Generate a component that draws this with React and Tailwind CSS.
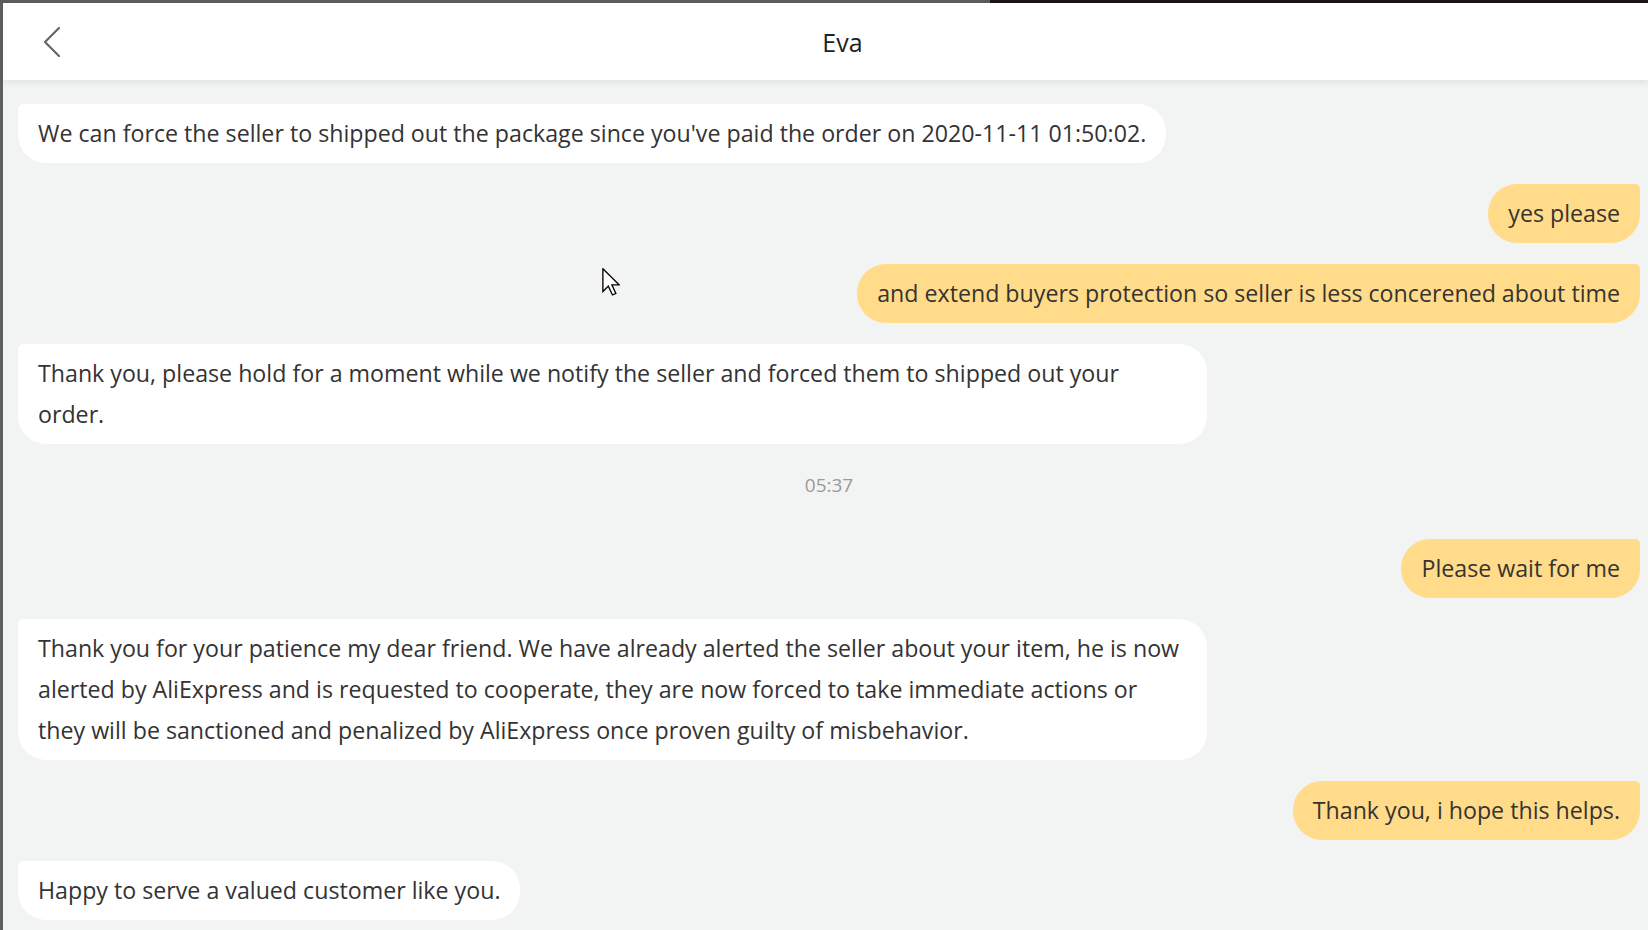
import React from "react";

function Left({ children, multi }) {
  return (
    <div className="flex justify-start">
      <div
        className={
          "bg-white rounded-[28px] rounded-tl-[5px] px-[20px] py-[9px] leading-[41px] text-[23.2px] text-[#333333] " +
          (multi ? "w-[1189px]" : "whitespace-nowrap")
        }
      >
        {children}
      </div>
    </div>
  );
}

function Right({ children }) {
  return (
    <div className="flex justify-end">
      <div className="bg-[#ffdb8a] rounded-[29px] rounded-tr-[5px] px-[20px] py-[9px] leading-[41px] text-[23.2px] text-[#363430] whitespace-nowrap">
        {children}
      </div>
    </div>
  );
}

export default function App() {
  return (
    <div className="w-[1648px] h-[930px] overflow-hidden flex flex-col bg-[#5f5f5f] font-['Open_Sans',sans-serif]">
      <div className="h-[3px] flex shrink-0">
        <div className="w-[990px] bg-[#5c5c5c]" />
        <div className="flex-1 bg-[#1b1414]" />
      </div>
      <div className="flex-1 flex min-h-0">
        <div className="w-[3px] shrink-0 bg-[#5f5f5f]" />
        <div className="flex-1 flex flex-col bg-[#f2f4f3] min-w-0 relative">
          <div className="h-[77px] shrink-0 bg-white relative z-10 shadow-[0_3px_6px_rgba(0,0,0,0.07)] grid grid-cols-[1fr_auto_1fr] items-center pl-[34px]">
            <div className="pl-[5px] flex items-center">
              <svg width="20" height="32" viewBox="0 0 20 32" fill="none">
                <polyline
                  points="17,2 3,16 17,30"
                  stroke="#666666"
                  strokeWidth="2.2"
                  strokeLinecap="round"
                  strokeLinejoin="round"
                />
              </svg>
            </div>
            <div className="text-[25px] text-[#222222] leading-none pt-[2px]">Eva</div>
            <div />
          </div>

          <div className="flex flex-col gap-[21px] pt-[24px] pl-[15px] pr-[8px]">
            <Left>
              We can force the seller to shipped out the package since you've paid the order on 2020-11-11 01:50:02.
            </Left>
            <Right>yes please</Right>
            <Right>and extend buyers protection so seller is less concerened about time</Right>
            <Left multi>
              Thank you, please hold for a moment while we notify the seller and forced them to shipped out your
              <br />
              order.
            </Left>
            <div className="h-[53px] pt-[6px] flex justify-center">
              <span className="text-[19px] leading-[28px] text-[#9a9a9a]">05:37</span>
            </div>
            <Right>Please wait for me</Right>
            <Left multi>
              Thank you for your patience my dear friend. We have already alerted the seller about your item, he is now
              <br />
              alerted by AliExpress and is requested to cooperate, they are now forced to take immediate actions or
              <br />
              they will be sanctioned and penalized by AliExpress once proven guilty of misbehavior.
            </Left>
            <Right>Thank you, i hope this helps.</Right>
            <Left>Happy to serve a valued customer like you.</Left>
          </div>

          <svg
            className="absolute left-[599px] top-[265px] z-20"
            width="18"
            height="28"
            viewBox="0 0 12 19"
          >
            <polygon
              points="0.5,0.5 0.5,16 4.2,12.3 7,18.3 9.3,17.3 6.6,11.4 11.5,11.4"
              fill="#ffffff"
              stroke="#000000"
              strokeWidth="0.9"
              strokeLinejoin="miter"
            />
          </svg>
        </div>
      </div>
    </div>
  );
}
